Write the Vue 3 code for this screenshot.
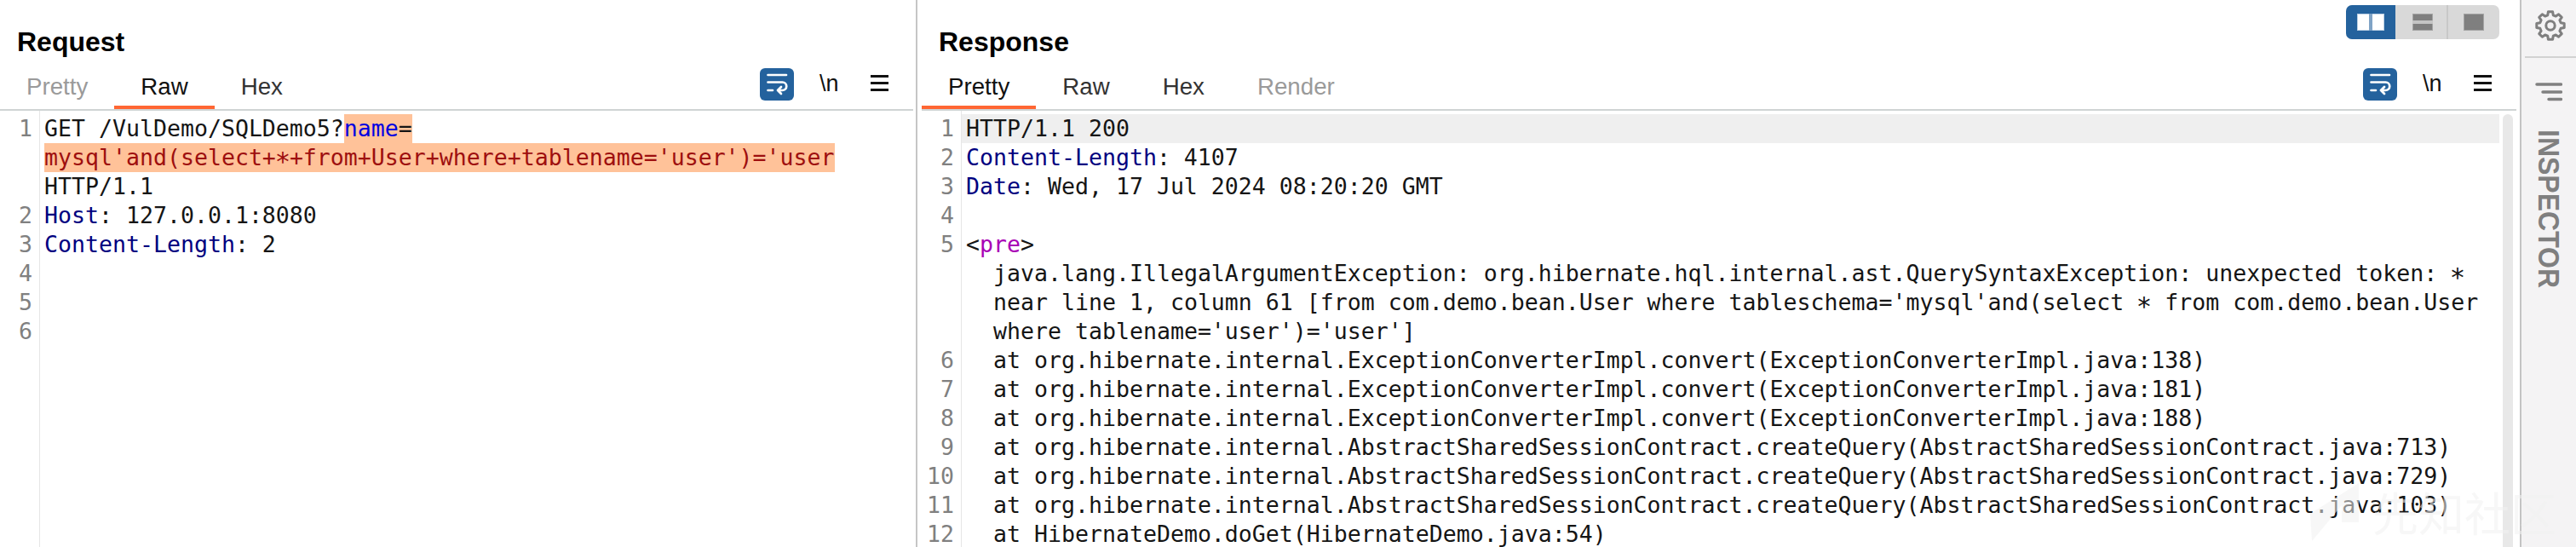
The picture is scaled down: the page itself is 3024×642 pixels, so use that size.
<script setup>
const reqTabs = [{ t: 'Pretty', c: 'dim' }, { t: 'Raw', c: 'on' }, { t: 'Hex', c: '' }]
const resTabs = [{ t: 'Pretty', c: 'on' }, { t: 'Raw', c: '' }, { t: 'Hex', c: '' }, { t: 'Render', c: 'dim' }]
const stack = [
  [6, 'at org.hibernate.internal.ExceptionConverterImpl.convert(ExceptionConverterImpl.java:138)'],
  [7, 'at org.hibernate.internal.ExceptionConverterImpl.convert(ExceptionConverterImpl.java:181)'],
  [8, 'at org.hibernate.internal.ExceptionConverterImpl.convert(ExceptionConverterImpl.java:188)'],
  [9, 'at org.hibernate.internal.AbstractSharedSessionContract.createQuery(AbstractSharedSessionContract.java:713)'],
  [10, 'at org.hibernate.internal.AbstractSharedSessionContract.createQuery(AbstractSharedSessionContract.java:729)'],
  [11, 'at org.hibernate.internal.AbstractSharedSessionContract.createQuery(AbstractSharedSessionContract.java:103)'],
  [12, 'at HibernateDemo.doGet(HibernateDemo.java:54)']
]
const pt = (r, deg) => {
  const a = (deg * Math.PI) / 180
  return `${(20 + r * Math.cos(a)).toFixed(2)} ${(20 + r * Math.sin(a)).toFixed(2)}`
}
const gearPath = Array.from({ length: 8 }, (_, i) => {
  const c = i * 45 - 90
  return [pt(12.6, c - 15), pt(16.4, c - 9), pt(16.4, c + 9), pt(12.6, c + 15)].join(' L')
}).join(' L').replace(/^/, 'M') + 'Z'
</script>

<template>
  <div class="app">
    <section class="pane req">
      <h2 class="title">Request</h2>
      <div class="bar">
        <div class="tabs">
          <span v-for="x in reqTabs" :key="x.t" class="tab" :class="x.c">{{ x.t }}</span>
        </div>
        <div class="tools">
          <span class="wrapbtn">
            <svg width="40" height="38" viewBox="0 0 40 38" fill="none" stroke="#fff" stroke-width="2.700" stroke-linecap="round" stroke-linejoin="round">
              <path d="M9.500 8H31M9.500 16.500H26.500a4.750 4.750 0 0 1 0 9.500H21M25 22l-4 4 4 4M9.500 26H15" />
            </svg>
          </span>
          <span class="nl">\n</span>
          <span class="burger"><i></i><i></i><i></i></span>
        </div>
      </div>
      <div class="code">
        <div class="row"><span class="no">1</span><div class="txt">GET /VulDemo/SQLDemo5?<span class="hl"><span class="blue">name</span>=</span><br /><span class="hl red">mysql'and(select+<span class="star">*</span>+from+User+where+tablename='user')='user</span><br />HTTP/1.1</div></div>
        <div class="row"><span class="no">2</span><div class="txt"><span class="navy">Host</span>: 127.0.0.1:8080</div></div>
        <div class="row"><span class="no">3</span><div class="txt"><span class="navy">Content-Length</span>: 2</div></div>
        <div class="row"><span class="no">4</span><div class="txt">&nbsp;</div></div>
        <div class="row"><span class="no">5</span><div class="txt">&nbsp;</div></div>
        <div class="row"><span class="no">6</span><div class="txt">&nbsp;</div></div>
      </div>
    </section>

    <section class="pane res">
      <h2 class="title">Response</h2>
      <div class="layout">
        <span class="seg active">
          <svg width="32" height="20" viewBox="0 0 32 20"><rect width="32" height="20" fill="#bcd0e3" /><rect x="1" y="1" width="13" height="18" fill="#fff" /><rect x="14" width="4" height="20" fill="#7fa3c6" /><rect x="18" y="1" width="13" height="18" fill="#fff" /></svg>
        </span>
        <span class="seg mid">
          <svg width="24" height="20" viewBox="0 0 24 20"><rect width="24" height="20" fill="#a3a3a3" /><rect x="1" y="1" width="22" height="7" fill="#7f7f7f" /><rect y="8" width="24" height="4" fill="#c4c4c4" /><rect x="1" y="12" width="22" height="7" fill="#7f7f7f" /></svg>
        </span>
        <span class="seg">
          <svg width="24" height="20" viewBox="0 0 24 20"><rect width="24" height="20" fill="#a3a3a3" /><rect x="1" y="1" width="22" height="18" fill="#7f7f7f" /></svg>
        </span>
      </div>
      <div class="bar">
        <div class="tabs">
          <span v-for="x in resTabs" :key="x.t" class="tab" :class="x.c">{{ x.t }}</span>
        </div>
        <div class="tools">
          <span class="wrapbtn">
            <svg width="40" height="38" viewBox="0 0 40 38" fill="none" stroke="#fff" stroke-width="2.700" stroke-linecap="round" stroke-linejoin="round">
              <path d="M9.500 8H31M9.500 16.500H26.500a4.750 4.750 0 0 1 0 9.500H21M25 22l-4 4 4 4M9.500 26H15" />
            </svg>
          </span>
          <span class="nl">\n</span>
          <span class="burger"><i></i><i></i><i></i></span>
        </div>
      </div>
      <div class="scroller">
        <div class="code">
          <div class="row cur"><span class="no">1</span><div class="txt">HTTP/1.1 200</div></div>
          <div class="row"><span class="no">2</span><div class="txt"><span class="navy">Content-Length</span>: 4107</div></div>
          <div class="row"><span class="no">3</span><div class="txt"><span class="navy">Date</span>: Wed, 17 Jul 2024 08:20:20 GMT</div></div>
          <div class="row"><span class="no">4</span><div class="txt">&nbsp;</div></div>
          <div class="row"><span class="no">5</span><div class="txt">&lt;<span class="purple">pre</span>&gt;<div class="ind">java.lang.IllegalArgumentException: org.hibernate.hql.internal.ast.QuerySyntaxException: unexpected token: <span class="star">*</span></div><div class="ind">near line 1, column 61 [from com.demo.bean.User where tableschema='mysql'and(select <span class="star">*</span> from com.demo.bean.User</div><div class="ind">where tablename='user')='user']</div></div></div>
          <div v-for="s in stack" :key="s[0]" class="row"><span class="no">{{ s[0] }}</span><div class="txt"><div class="ind">{{ s[1] }}</div></div></div>
        </div>
        <div class="track"></div>
      </div>
    </section>

    <aside class="side">
      <div class="gear">
        <svg width="40" height="40" viewBox="0 0 40 40" fill="none" stroke="#7f7f7f" stroke-width="3" stroke-linejoin="round">
          <path :d="gearPath" />
          <circle cx="20" cy="20" r="5.200" />
        </svg>
      </div>
      <div class="filter">
        <svg width="32" height="24" viewBox="0 0 32 24" fill="none" stroke="#808080" stroke-width="3.500" stroke-linecap="round">
          <path d="M2 3H30.500M9 12H30.500M16 20.500H30.500" />
        </svg>
      </div>
      <div class="vert">INSPECTOR</div>
    </aside>

    <div class="mark" aria-hidden="true">
      <svg width="57" height="68" viewBox="0 0 57 68"><path d="M57 0L0 36 2 68 37 26V46H57z" fill="#f2f2f2" /></svg>
      <span>先知社区</span>
    </div>
  </div>
</template>

<style>
html, body { margin: 0; background: #fff; }
</style>

<style scoped>
.app {
  width: 3024px;
  height: 642px;
  display: flex;
  overflow: hidden;
  position: relative;
  background: #fff;
  color: #151515;
  font-family: "Liberation Sans", Arial, sans-serif;
}
.pane { position: relative; box-sizing: border-box; display: flex; flex-direction: column; min-width: 0; }
.req { width: 1077px; border-right: 2px solid #c6c6c6; padding-right: 3px; }
.res { width: 1883px; border-right: 2px solid #c4c4c4; padding-left: 5px; padding-right: 4px; }
.title {
  margin: 0;
  height: 80px;
  box-sizing: border-box;
  padding: 29px 0 0 20px;
  font-size: 32px;
  line-height: 40px;
  font-weight: 700;
  color: #000;
}
.bar {
  height: 50px;
  box-sizing: border-box;
  border-bottom: 2px solid #cfd4d4;
  display: flex;
  justify-content: space-between;
}
.tabs { display: flex; height: 48px; }
.tab {
  box-sizing: border-box;
  height: 48px;
  padding: 0 31px;
  font-size: 27.700px;
  line-height: 44px;
  border-bottom: 4px solid transparent;
  color: #333;
}
.tab.on { color: #111; border-bottom-color: #ff6633; }
.tab.dim { color: #9a9a9a; }
.tools { display: flex; align-items: flex-start; padding-right: 29px; }
.wrapbtn {
  width: 40px;
  height: 38px;
  border-radius: 6px;
  background: #24629d;
  display: block;
}
.wrapbtn svg { display: block; }
.nl { margin-left: 30px; width: 22px; font-size: 27px; line-height: 30px; color: #111; margin-top: 3px; }
.burger { margin-left: 38px; width: 21px; height: 19px; margin-top: 8px; display: flex; flex-direction: column; justify-content: space-between; }
.burger i { display: block; height: 3px; background: #111; }
.code {
  flex: 1;
  min-width: 0;
  padding-top: 4px;
  font-family: "DejaVu Sans Mono", "Liberation Mono", monospace;
  font-size: 26.570px;
  line-height: 34px;
  background: linear-gradient(#e6e6e6, #e6e6e6) 46px 0 / 1px 100% no-repeat;
}
.row { display: flex; }
.no { width: 46px; flex: none; box-sizing: border-box; padding-right: 8px; margin-right: 1px; text-align: right; color: #808080; }
.txt { flex: 1; min-width: 0; padding-left: 5px; white-space: pre; }
.row.cur .txt { background: #efefef; }
.ind { padding-left: 32px; }
.hl { background: #ffc299; display: inline-block; }
.blue { color: #0000e0; }
.red { color: #9e0f0f; }
.navy { color: #000080; }
.purple { color: #a800b5; }
.star { display: inline-block; transform: translateY(5px) scale(1.150); }
.scroller { flex: 1; display: flex; min-height: 0; overflow: hidden; margin-right: 4px; }
.track {
  width: 12px;
  flex: none;
  margin: 4px 0 0 4px;
  background: #e8e8e8;
  border-radius: 6px 6px 0 0;
}
.layout {
  position: absolute;
  left: 1677px;
  top: 6px;
  width: 180px;
  height: 40px;
  display: flex;
  border-radius: 7px;
  overflow: hidden;
  background: #d9d9d9;
}
.seg { flex: 1; display: flex; align-items: center; justify-content: center; }
.seg svg { display: block; }
.seg.active { flex: none; width: 58px; background: #24629d; }
.seg.mid { flex: none; width: 62px; border-right: 2px solid #c8c8c8; box-sizing: border-box; padding-left: 4px; }
.side { flex: 1; min-width: 0; background: #f4f3f4; display: flex; flex-direction: column; align-items: center; }
.gear {
  align-self: stretch;
  margin-left: 4px;
  height: 68px;
  box-sizing: border-box;
  border-bottom: 2px solid #d2d2d2;
  display: flex;
  align-items: center;
  justify-content: center;
  padding-bottom: 6px;
}
.gear svg { display: block; }
.filter { height: 24px; margin-top: 28px; }
.filter svg { display: block; }
.vert {
  margin-top: 32px;
  writing-mode: vertical-rl;
  font-size: 32px;
  line-height: 32px;
  font-weight: 700;
  color: #7f7f7f;
  transform: scaleX(1.100);
}
.mark {
  position: absolute;
  left: 2712px;
  top: 567px;
  display: flex;
  align-items: center;
  gap: 16px;
  opacity: .55;
  pointer-events: none;
  color: #f2f2f2;
  font-family: "Noto Sans CJK SC", sans-serif;
  font-size: 54px;
  line-height: 68px;
}
.mark svg { display: block; }
</style>
